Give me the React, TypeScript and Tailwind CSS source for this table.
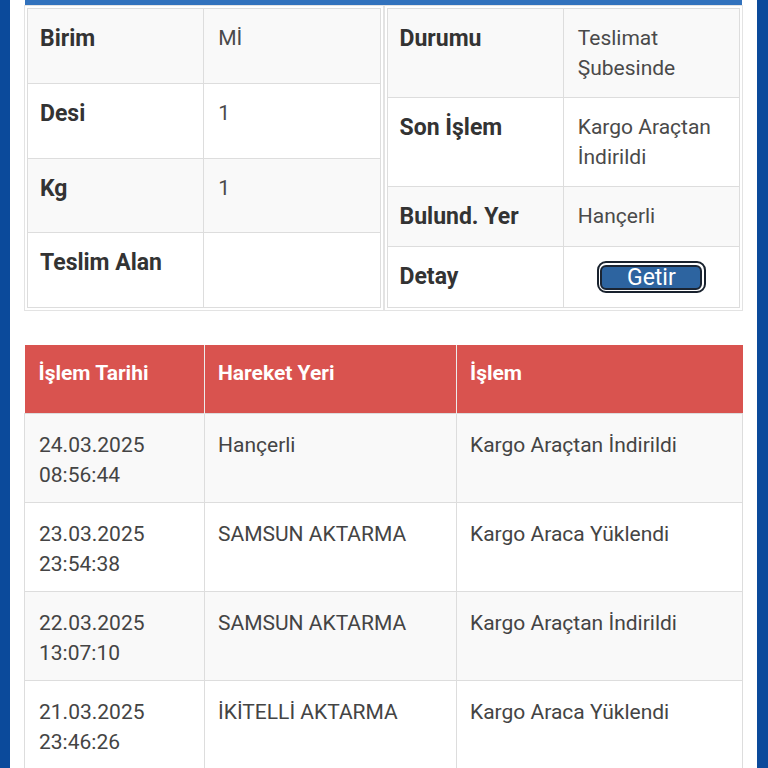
import React from "react";

const leftRows: [string, string][] = [
  ["Birim", "Mİ"],
  ["Desi", "1"],
  ["Kg", "1"],
  ["Teslim Alan", ""],
];

const moves: [string, string, string, string][] = [
  ["24.03.2025", "08:56:44", "Hançerli", "Kargo Araçtan İndirildi"],
  ["23.03.2025", "23:54:38", "SAMSUN AKTARMA", "Kargo Araca Yüklendi"],
  ["22.03.2025", "13:07:10", "SAMSUN AKTARMA", "Kargo Araçtan İndirildi"],
  ["21.03.2025", "23:46:26", "İKİTELLİ AKTARMA", "Kargo Araca Yüklendi"],
];

function Label({ children }: { children: React.ReactNode }) {
  return (
    <div className="pl-[12px] pr-[14px] py-[14px] border-r border-b border-[#dddddd] text-[23px] leading-[31px] font-bold text-[#333333]">
      {children}
    </div>
  );
}

function Value({ children }: { children: React.ReactNode }) {
  return (
    <div className="px-[14px] py-[14px] border-r border-b border-[#dddddd] text-[21px] leading-[30px] text-[#4a4a4a]">
      {children}
    </div>
  );
}

function GetirButton() {
  return (
    <div className="flex justify-center">
      <div className="w-[109px] h-[32px] rounded-[9px] border-[2.5px] border-[#19222e] bg-white p-[1.5px]">
        <div className="h-full rounded-[6px] border-2 border-[#1b2533] bg-[#2d64a0] flex items-center justify-center">
          <span className="text-white text-[23px] leading-[20px] pt-[2px]">Getir</span>
        </div>
      </div>
    </div>
  );
}

export default function App() {
  return (
    <div className="w-[768px] h-[768px] overflow-hidden flex bg-white font-[Roboto,sans-serif]">
      <div className="w-[10px] shrink-0 bg-[#0b4a9b]" />
      <div className="flex-1 min-w-0 px-[14px]">
        <div className="h-[5px] bg-[#3272bd] mx-[1px]" />
        <div className="grid grid-cols-2">
          {/* left table */}
          <div className="border border-[#e3e3e3] p-[2px] flex flex-col">
            <div className="flex-1 flex flex-col border-t border-l border-[#dddddd]">
              {leftRows.map(([l, v], i) => (
                <div
                  key={l}
                  className={`flex-1 grid grid-cols-2 ${i % 2 === 0 ? "bg-[#f9f9f9]" : "bg-white"}`}
                >
                  <Label>{l}</Label>
                  <Value>{v}</Value>
                </div>
              ))}
            </div>
          </div>
          {/* right table */}
          <div className="border border-[#e3e3e3] p-[2px] flex flex-col">
            <div className="flex-1 flex flex-col border-t border-l border-[#dddddd]">
              <div className="grid grid-cols-2 bg-[#f9f9f9]">
                <Label>Durumu</Label>
                <Value>Teslimat Şubesinde</Value>
              </div>
              <div className="grid grid-cols-2 bg-white">
                <Label>Son İşlem</Label>
                <Value>Kargo Araçtan İndirildi</Value>
              </div>
              <div className="grid grid-cols-2 bg-[#f9f9f9]">
                <Label>Bulund. Yer</Label>
                <Value>Hançerli</Value>
              </div>
              <div className="flex-1 grid grid-cols-2 bg-white">
                <Label>Detay</Label>
                <div className="px-[14px] py-[14px] border-r border-b border-[#dddddd]">
                  <GetirButton />
                </div>
              </div>
            </div>
          </div>
        </div>

        <table className="mt-[34px] w-full border-collapse table-fixed">
          <colgroup>
            <col className="w-[180px]" />
            <col className="w-[252px]" />
            <col />
          </colgroup>
          <thead>
            <tr className="bg-[#d9534f] text-white text-[21px] leading-[30px] font-bold text-left">
              <th className="px-[14px] pt-[13px] pb-[25px] border-r border-[#ececec] text-left font-bold">İşlem Tarihi</th>
              <th className="px-[13px] pt-[13px] pb-[25px] border-r border-[#ececec] text-left font-bold">Hareket Yeri</th>
              <th className="px-[13px] pt-[13px] pb-[25px] text-left font-bold">İşlem</th>
            </tr>
          </thead>
          <tbody>
            {moves.map(([d, t, place, op], i) => (
              <tr
                key={i}
                className={`text-[21px] leading-[30px] text-[#444444] ${i % 2 === 0 ? "bg-[#f9f9f9]" : "bg-white"}`}
              >
                <td className="align-top px-[14px] pt-[16px] pb-[12px] border border-[#dddddd]">
                  {d}
                  <br />
                  {t}
                </td>
                <td className="align-top px-[13px] pt-[16px] pb-[12px] border border-[#dddddd]">{place}</td>
                <td className="align-top px-[13px] pt-[16px] pb-[12px] border border-[#dddddd]">{op}</td>
              </tr>
            ))}
          </tbody>
        </table>
      </div>
      <div className="w-[11px] shrink-0 bg-[#0b4a9b]" />
    </div>
  );
}
